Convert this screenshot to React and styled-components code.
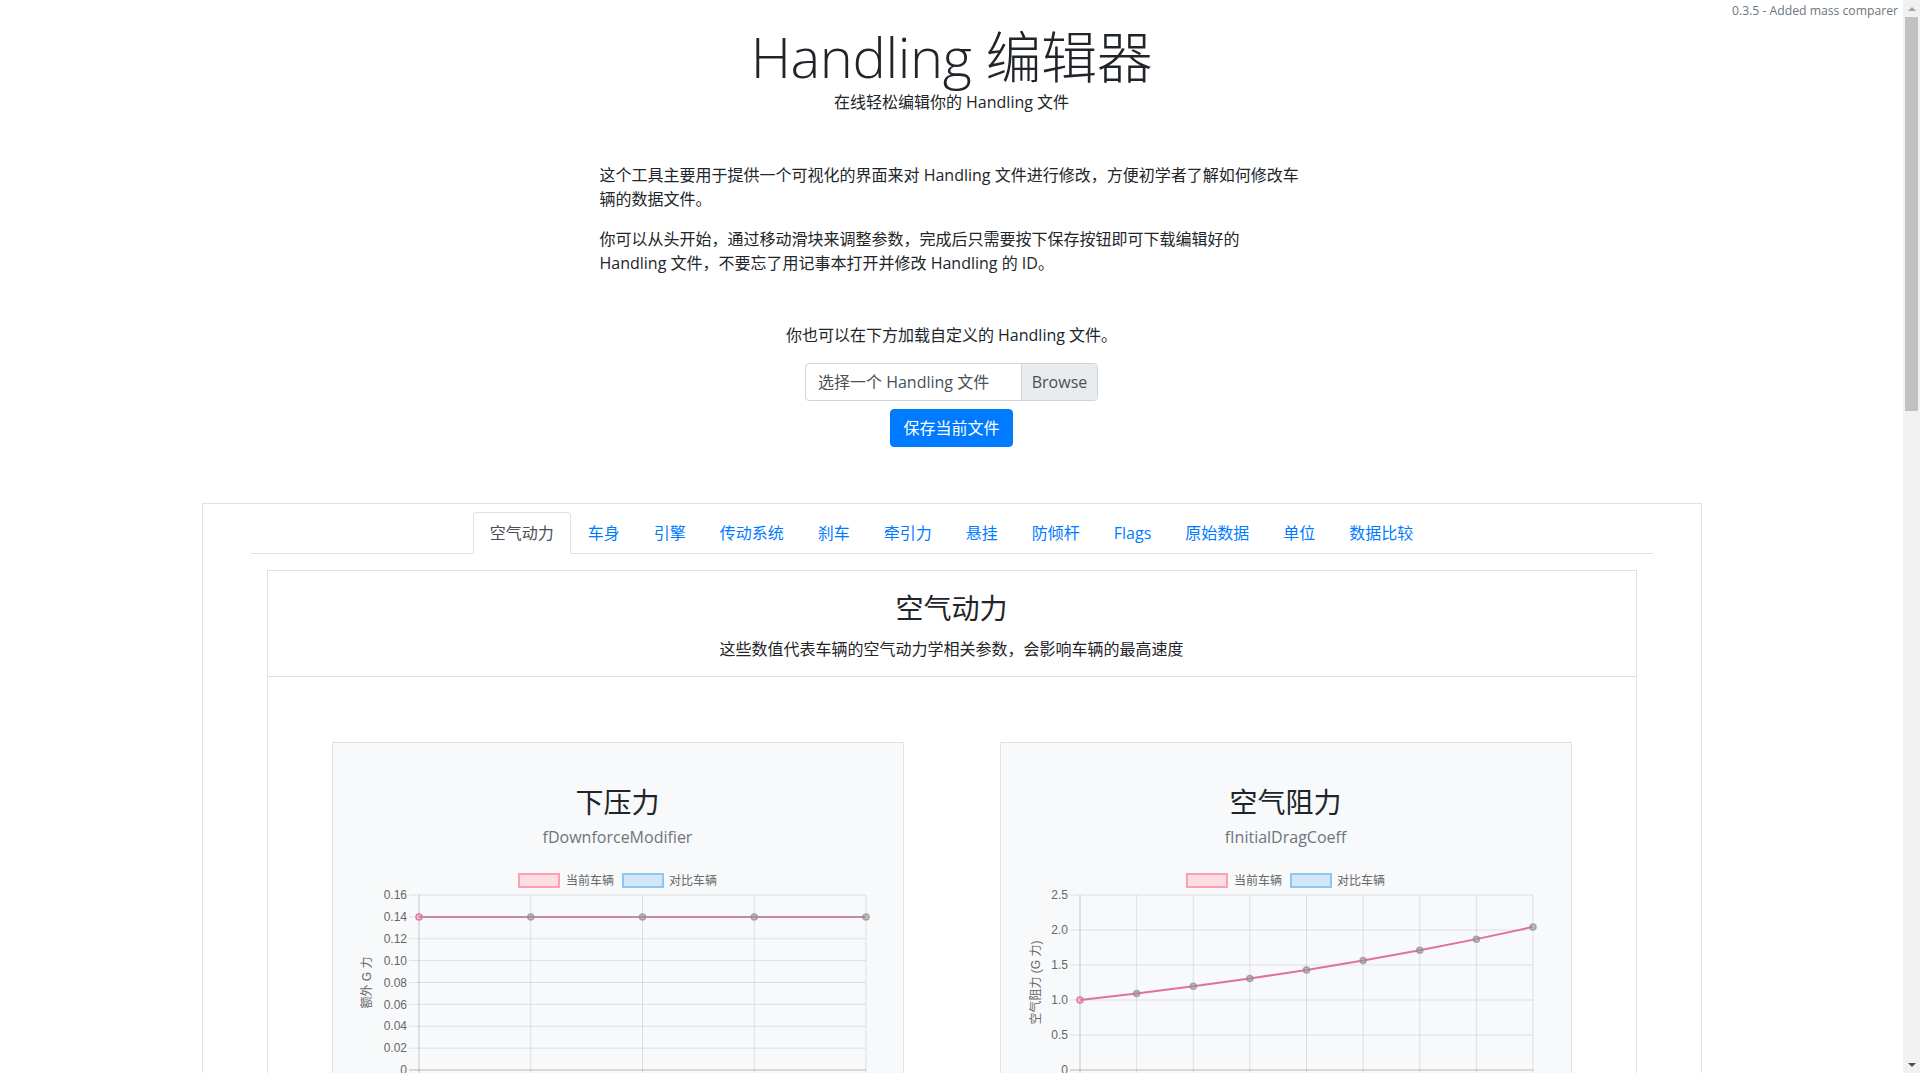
import React from "react";
import styled, { createGlobalStyle } from "styled-components";

const GlobalStyle = createGlobalStyle`
  * { box-sizing: border-box; }
  html, body {
    margin: 0;
    height: 100%;
    overflow: hidden;
    background: #fff;
  }
  body {
    font-family: "Open Sans", "Noto Sans CJK SC", sans-serif;
    font-size: 16px;
    line-height: 1.5;
    color: #212529;
  }
`;

const Shell = styled.div`
  display: flex;
  height: 100vh;
`;

const Viewport = styled.main`
  flex: 1;
  min-width: 0;
  position: relative;
  overflow: hidden;
`;

const Version = styled.span`
  position: absolute;
  top: 1px;
  right: 5px;
  font-size: 12.2px;
  line-height: 20px;
  color: #6c757d;
`;

const Hero = styled.header`
  padding-top: 23px;
  text-align: center;
`;

const Title = styled.h1`
  margin: 0;
  font-size: 56px;
  font-weight: 300;
  line-height: 1.2;
  letter-spacing: -0.4px;
`;

const Tagline = styled.p`
  margin: 0;
`;

const Intro = styled.section`
  width: 704px;
  margin: 49px auto 0;

  p {
    margin: 0 0 16px;
  }
`;

const Loader = styled.section`
  margin-top: 48px;
  display: flex;
  flex-direction: column;
  align-items: center;
`;

const Hint = styled.p`
  margin: 0;
`;

const FilePicker = styled.label`
  display: flex;
  width: 293px;
  height: 38px;
  margin-top: 16px;
  border: 1px solid #ced4da;
  border-radius: 4px;
  overflow: hidden;
  color: #495057;
  cursor: pointer;
`;

const FileName = styled.span`
  flex: 1;
  padding: 6px 12px;
  line-height: 24px;
`;

const Browse = styled.span`
  width: 76px;
  padding: 6px 0;
  text-align: center;
  line-height: 24px;
  background: #e9ecef;
  border-left: 1px solid #ced4da;
`;

const SaveButton = styled.button`
  margin-top: 8px;
  padding: 6px 12px;
  font: inherit;
  line-height: 24px;
  color: #fff;
  background: #007bff;
  border: 1px solid #007bff;
  border-radius: 4px;
  cursor: pointer;
`;

const Panel = styled.section`
  width: 1500px;
  margin: 56px auto 0;
  padding: 8px 48px 0;
  border: 1px solid #dee2e6;
`;

const TabList = styled.ul`
  display: flex;
  justify-content: center;
  margin: 0;
  padding: 0;
  list-style: none;
  border-bottom: 1px solid #dee2e6;
`;

const Tab = styled.li`
  margin-bottom: -1px;
  padding: 8px 16px;
  line-height: 24px;
  border: 1px solid transparent;
  border-radius: 4px 4px 0 0;
  color: ${(p) => (p.$active ? "#495057" : "#007bff")};
  background: ${(p) => (p.$active ? "#fff" : "transparent")};
  border-color: ${(p) => (p.$active ? "#dee2e6 #dee2e6 #fff" : "transparent")};
  cursor: pointer;
`;

const SectionCard = styled.div`
  margin: 16px 16px 0;
  border: 1px solid #dee2e6;
`;

const SectionHeader = styled.div`
  padding: 21px 20px 15px;
  text-align: center;
  border-bottom: 1px solid #dee2e6;
`;

const SectionTitle = styled.h3`
  margin: 0 0 11px;
  font-size: 28px;
  font-weight: 400;
  line-height: 1.2;
`;

const SectionText = styled.p`
  margin: 0;
`;

const ChartGrid = styled.div`
  display: grid;
  grid-template-columns: 1fr 1fr;
  gap: 96px;
  padding: 65px 64px 40px;
`;

const ChartCard = styled.div`
  padding: 43px 0 20px;
  text-align: center;
  background: #f8f9fa;
  border: 1px solid #dee2e6;
`;

const ChartTitle = styled.h4`
  margin: 0 0 6px;
  font-size: 28px;
  font-weight: 400;
  line-height: 1.2;
`;

const ChartKey = styled.p`
  margin: 0;
  color: #6c757d;
`;

const ChartFrame = styled.svg`
  display: block;
  margin-top: 12px;
  font-family: "Liberation Sans", "Noto Sans CJK SC", sans-serif;
  font-size: 12px;
`;

const ScrollRail = styled.div`
  width: 17px;
  display: flex;
  flex-direction: column;
  background: #f1f1f1;
`;

const RailArrow = styled.div`
  height: 17px;
  display: flex;
  align-items: center;
  justify-content: center;

  &::after {
    content: "";
    border-left: 4px solid transparent;
    border-right: 4px solid transparent;
    ${(p) =>
      p.$dir === "up"
        ? "border-bottom: 4px solid #a3a3a3;"
        : "border-top: 4px solid #505050;"}
  }
`;

const RailTrack = styled.div`
  flex: 1;
`;

const Thumb = styled.div`
  height: 394px;
  margin: 0 2px;
  background: #c1c1c1;
`;

const tabs = ["空气动力", "车身", "引擎", "传动系统", "刹车", "牵引力", "悬挂", "防倾杆", "Flags", "原始数据", "单位", "数据比较"];

const LineChart = ({ plotLeft, plotRight, ticks, yMax, values, yTitle, titleX, lineColor }) => {
  const width = 570;
  const plotTop = 34;
  const plotBottom = 209;
  const y = (v) => plotBottom - (v / yMax) * (plotBottom - plotTop);
  const step = (plotRight - plotLeft) / (values.length - 1);
  const x = (i) => plotLeft + i * step;
  const legendStart = width / 2 - 99;
  const line = values.map((v, i) => `${x(i)},${y(v)}`).join(" ");

  return (
    <ChartFrame width={width} height={280}>
      <rect x={legendStart} y={13} width={40} height={13} fill="#fcdde4" stroke="#ff9fb4" strokeWidth="2" />
      <text x={legendStart + 47} y={24} fill="#666">当前车辆</text>
      <rect x={legendStart + 104} y={13} width={40} height={13} fill="#d2e6f7" stroke="#8ec8f0" strokeWidth="2" />
      <text x={legendStart + 150} y={24} fill="#666">对比车辆</text>

      {ticks.map((t, i) => {
        const ty = plotTop + (i * (plotBottom - plotTop)) / (ticks.length - 1);
        const last = i === ticks.length - 1;
        return (
          <g key={t}>
            <line x1={plotLeft - 10} x2={plotRight} y1={ty} y2={ty} stroke={last ? "rgba(0,0,0,0.25)" : "rgba(0,0,0,0.1)"} />
            <text x={plotLeft - 12} y={ty} dy="0.35em" textAnchor="end" fill="#666">{t}</text>
          </g>
        );
      })}

      {values.map((_, i) => (
        <line key={i} x1={x(i)} x2={x(i)} y1={plotTop} y2={plotBottom + 10} stroke={i === 0 ? "rgba(0,0,0,0.2)" : "rgba(0,0,0,0.1)"} />
      ))}

      <text
        x={titleX}
        y={(plotTop + plotBottom) / 2}
        transform={`rotate(-90 ${titleX} ${(plotTop + plotBottom) / 2})`}
        textAnchor="middle"
        dy="0.35em"
        fill="#666"
      >
        {yTitle}
      </text>

      <polyline points={line} fill="none" stroke={lineColor} strokeWidth="2" />
      {values.map((v, i) => (
        <circle
          key={i}
          cx={x(i)}
          cy={y(v)}
          r="3"
          fill={i === 0 ? "rgba(255,99,132,0.25)" : "rgba(150,150,150,0.55)"}
          stroke={i === 0 ? "#dd7aa6" : "rgba(140,140,140,0.7)"}
          strokeWidth="1.5"
        />
      ))}
    </ChartFrame>
  );
};

const dragValues = Array.from({ length: 9 }, (_, i) => Math.pow(1.0935, i));

export default function App() {
  return (
    <Shell>
      <GlobalStyle />
      <Viewport>
        <Version>0.3.5 - Added mass comparer</Version>

        <Hero>
          <Title>Handling 编辑器</Title>
          <Tagline>在线轻松编辑你的 Handling 文件</Tagline>
        </Hero>

        <Intro>
          <p>这个工具主要用于提供一个可视化的界面来对 Handling 文件进行修改，方便初学者了解如何修改车辆的数据文件。</p>
          <p>你可以从头开始，通过移动滑块来调整参数，完成后只需要按下保存按钮即可下载编辑好的 Handling 文件，不要忘了用记事本打开并修改 Handling 的 ID。</p>
        </Intro>

        <Loader>
          <Hint>你也可以在下方加载自定义的 Handling 文件。</Hint>
          <FilePicker>
            <FileName>选择一个 Handling 文件</FileName>
            <Browse>Browse</Browse>
          </FilePicker>
          <SaveButton>保存当前文件</SaveButton>
        </Loader>

        <Panel>
          <TabList>
            {tabs.map((t, i) => (
              <Tab key={t} $active={i === 0}>{t}</Tab>
            ))}
          </TabList>

          <SectionCard>
            <SectionHeader>
              <SectionTitle>空气动力</SectionTitle>
              <SectionText>这些数值代表车辆的空气动力学相关参数，会影响车辆的最高速度</SectionText>
            </SectionHeader>

            <ChartGrid>
              <ChartCard>
                <ChartTitle>下压力</ChartTitle>
                <ChartKey>fDownforceModifier</ChartKey>
                <LineChart
                  plotLeft={86}
                  plotRight={533}
                  ticks={["0.16", "0.14", "0.12", "0.10", "0.08", "0.06", "0.04", "0.02", "0"]}
                  yMax={0.16}
                  values={[0.14, 0.14, 0.14, 0.14, 0.14]}
                  yTitle="额外 G 力"
                  titleX={34}
                  lineColor="#c986b0"
                />
              </ChartCard>

              <ChartCard>
                <ChartTitle>空气阻力</ChartTitle>
                <ChartKey>fInitialDragCoeff</ChartKey>
                <LineChart
                  plotLeft={79}
                  plotRight={532}
                  ticks={["2.5", "2.0", "1.5", "1.0", "0.5", "0"]}
                  yMax={2.5}
                  values={dragValues}
                  yTitle="空气阻力 (G 力)"
                  titleX={35}
                  lineColor="#e0719d"
                />
              </ChartCard>
            </ChartGrid>
          </SectionCard>
        </Panel>
      </Viewport>

      <ScrollRail>
        <RailArrow $dir="up" />
        <RailTrack>
          <Thumb />
        </RailTrack>
        <RailArrow $dir="down" />
      </ScrollRail>
    </Shell>
  );
}
